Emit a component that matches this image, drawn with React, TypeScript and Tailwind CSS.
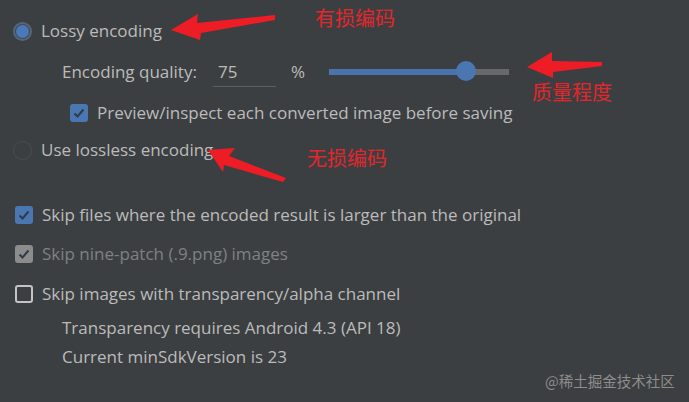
import React from "react";

const FONT = { fontFamily: '"Open Sans", "Noto Sans", "Noto Sans CJK SC", sans-serif' };
const CJK = { fontFamily: '"Noto Sans CJK SC", "Noto Sans", sans-serif' };

function Radio({ checked }: { checked: boolean }) {
  return checked ? (
    <span className="flex h-[19px] w-[19px] items-center justify-center rounded-full border-2 border-[#55667a] bg-[#3f4a56]">
      <span className="h-[13px] w-[13px] rounded-full bg-[#4b78b8]" />
    </span>
  ) : (
    <span className="h-[19px] w-[19px] rounded-full border border-[#4a4d50] bg-[#3c3f41]" />
  );
}

function Check({ state }: { state: "on" | "off" | "disabled" }) {
  if (state === "off") {
    return <span className="h-[18px] w-[18px] rounded-[3px] border-2 border-[#c4c4c4]" />;
  }
  const bg = state === "on" ? "bg-[#4a77b2]" : "bg-[#8c8c8c]";
  return (
    <span className={`flex h-[18px] w-[18px] items-center justify-center rounded-[3px] ${bg}`}>
      <svg width="14" height="14" viewBox="0 0 14 14">
        <path d="M2.5 7.5 L5.5 10.5 L11.5 3.5" fill="none" stroke="#2e3b4a" strokeWidth="2" />
      </svg>
    </span>
  );
}

export default function App() {
  return (
    <div className="relative h-[402px] w-[689px] overflow-hidden bg-[#3c3f41] text-[17px] text-[#bbbbbb]" style={FONT}>
      <div className="flex flex-col pt-[19px]">
        {/* lossy */}
        <div className="flex h-[24px] items-center gap-[9px] pl-[13px]">
          <Radio checked />
          <span>Lossy encoding</span>
        </div>

        {/* quality */}
        <div className="mt-[17px] flex h-[24px] items-center pl-[62px]">
          <span>Encoding quality:</span>
          <div className="relative ml-[16px] w-[63px] pl-[5px]">
            <span>75</span>
            <span className="absolute left-0 right-0 top-[27px] h-px bg-[#5c5f61]" />
          </div>
          <span className="ml-[15px]">%</span>
          <div className="relative ml-[24px] flex h-[20px] w-[180px] items-center">
            <div className="h-[6px] w-[137px] bg-[#4a72ac]" />
            <div className="h-[6px] flex-1 bg-[#666869]" />
            <span className="absolute left-[127px] top-[-1px] h-[20px] w-[20px] rounded-full bg-[#4a76b2]" />
          </div>
        </div>

        {/* preview */}
        <div className="mt-[17px] flex h-[24px] items-center gap-[9px] pl-[70px]">
          <Check state="on" />
          <span>Preview/inspect each converted image before saving</span>
        </div>

        {/* lossless */}
        <div className="mt-[13px] flex h-[24px] items-center gap-[9px] pl-[13px]">
          <Radio checked={false} />
          <span>Use lossless encoding</span>
        </div>

        <div className="mt-[41px] flex h-[24px] items-center gap-[9px] pl-[15px]">
          <Check state="on" />
          <span>Skip files where the encoded result is larger than the original</span>
        </div>

        <div className="mt-[15px] flex h-[24px] items-center gap-[9px] pl-[15px]">
          <Check state="disabled" />
          <span className="text-[#7f8183]">Skip nine-patch (.9.png) images</span>
        </div>

        <div className="mt-[16px] flex h-[24px] items-center gap-[9px] pl-[15px]">
          <Check state="off" />
          <span>Skip images with transparency/alpha channel</span>
        </div>

        <div className="mt-[10px] flex h-[24px] items-center pl-[62px]">
          <span>Transparency requires Android 4.3 (API 18)</span>
        </div>
        <div className="mt-[5px] flex h-[24px] items-center pl-[62px]">
          <span>Current minSdkVersion is 23</span>
        </div>
      </div>

      {/* annotations */}
      <span className="absolute left-[315px] top-[4px] text-[20px] leading-[28px] text-[#e3262c]" style={CJK}>有损编码</span>
      <span className="absolute left-[532px] top-[78px] text-[20px] leading-[28px] text-[#e3262c]" style={CJK}>质量程度</span>
      <span className="absolute left-[307px] top-[144px] text-[20px] leading-[28px] text-[#e3262c]" style={CJK}>无损编码</span>
      <span className="absolute left-[545px] top-[370px] text-[14.5px] leading-[22px] text-[#8d8d8d]" style={CJK}>@稀土掘金技术社区</span>

      <svg className="pointer-events-none absolute left-0 top-0" width="689" height="402">
        <g fill="#ee1c25">
          <polygon points="171,30 198,14 197,23 275,15 275,20 201,33 200,40" />
          <polygon points="527,67 552,52 552,61 602,62 602,66 553,72 553,78" />
          <polygon points="208,150 235,148 229,156 286,178 283,182 224,165 223,172" />
        </g>
      </svg>
    </div>
  );
}
